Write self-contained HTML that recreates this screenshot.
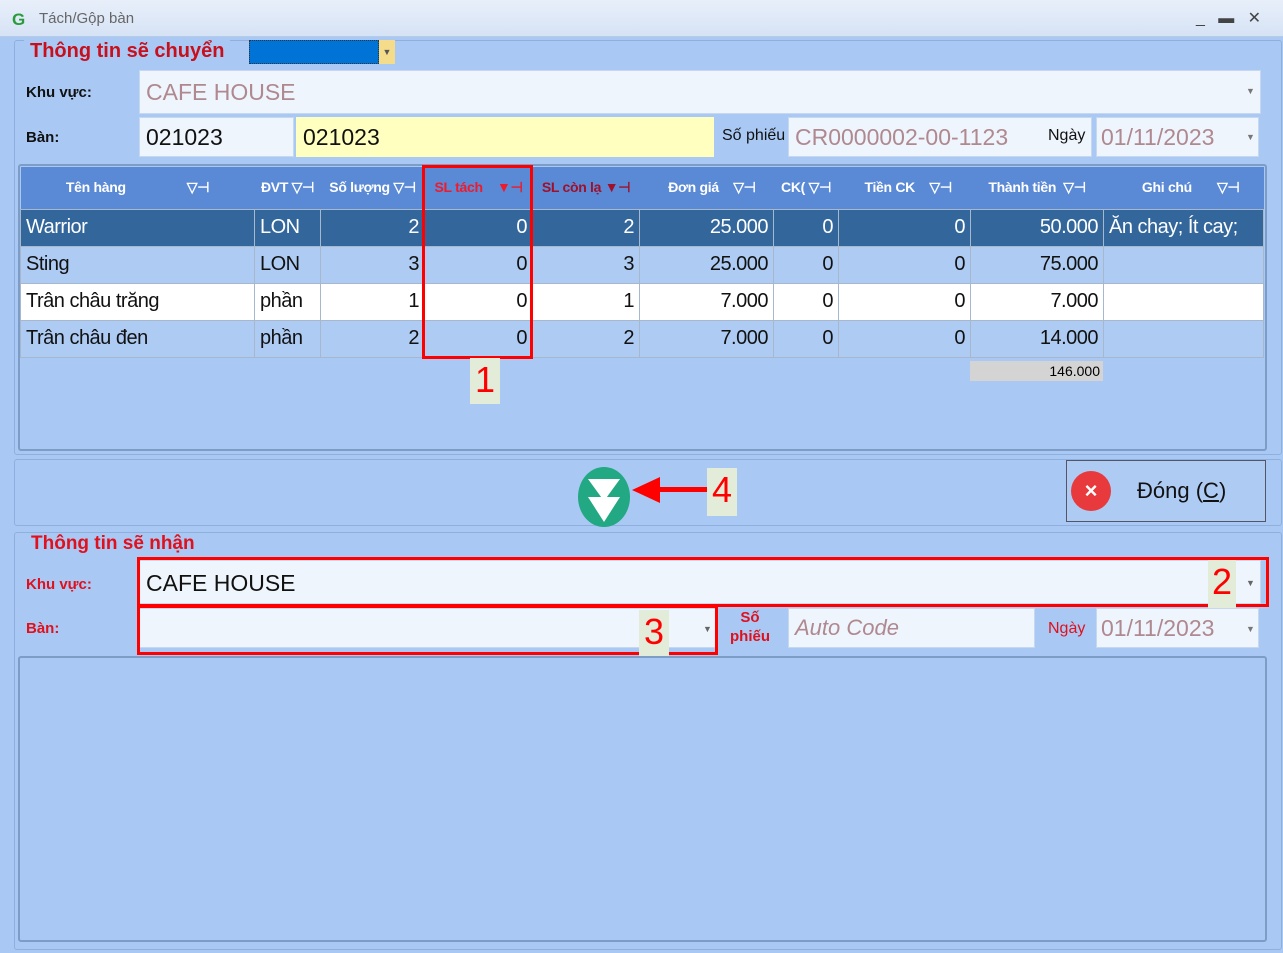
<!DOCTYPE html>
<html><head><meta charset="utf-8"><style>
*{margin:0;padding:0;box-sizing:border-box}
body{width:1283px;height:953px;overflow:hidden;background:#a9c9f4;font-family:"Liberation Sans",sans-serif;position:relative}
.a{position:absolute}
.tb{left:0;top:0;width:1283px;height:37px;background:linear-gradient(#e8effa,#d6e3f5);border-bottom:1px solid #b8cbe6}
.fs{border:1px solid #8fb0dc;border-radius:3px}
.inp{background:#eef5fc;border:1px solid #c5d8ef}
.lbl{font-size:15px;font-weight:bold;color:#111}
.big{font-size:23px}
.g{border-collapse:collapse;position:absolute;left:20px;top:167px;table-layout:fixed}
.g td{border:1px solid #a8b8cc;font-size:20px;height:37px;padding:0 5px;text-align:right;color:#111;white-space:nowrap;overflow:hidden;letter-spacing:-0.5px}
.g th{background:#5a89d6;color:#fff;font-size:14px;height:42px;font-weight:bold;border:none;white-space:nowrap;overflow:hidden;padding:0 4px;letter-spacing:-0.3px}
.sel td{background:#33679c;color:#fff}
.lb td{background:#aecbf3}
.wh td{background:#fff}
.red{border:3px solid #f00}
.num{background:#e3ecd9;color:#f00;font-size:36px;text-align:center;line-height:44px}
</style></head><body>
<div class="a tb"></div>
<div class="a" style="left:12px;top:10px;font-size:17px;font-weight:bold;color:#2a9b3a">G</div>
<div class="a" style="left:39px;top:10px;font-size:15px;color:#666">Tách/Gộp bàn</div>
<div class="a" style="left:1196px;top:8px;font-size:16px;color:#444">_&nbsp;&nbsp;&nbsp;▬&nbsp;&nbsp;&nbsp;✕</div>

<div class="a fs" style="left:14px;top:40px;width:1268px;height:415px"></div>
<div class="a" style="left:24px;top:40px;padding:0 6px;background:#a9c9f4;color:#c8101c;font-size:20px;font-weight:bold">Thông tin sẽ chuyển</div>
<div class="a" style="left:249px;top:40px;width:130px;height:24px;background:#0073d6;border:1px dotted #333"></div>
<div class="a" style="left:379px;top:40px;width:16px;height:24px;background:#f5dc8a;font-size:9px;color:#555;text-align:center;line-height:24px">▼</div>

<div class="a lbl" style="left:26px;top:84px">Khu vực:</div>
<div class="a inp" style="left:139px;top:70px;width:1122px;height:44px"></div>
<div class="a big" style="left:146px;top:79px;color:#b08890">CAFE HOUSE</div>
<div class="a" style="left:1246px;top:86px;font-size:9px;color:#777">▼</div>

<div class="a lbl" style="left:26px;top:129px">Bàn:</div>
<div class="a inp" style="left:139px;top:117px;width:155px;height:40px;background:#eef5fc"></div>
<div class="a big" style="left:146px;top:124px;color:#111">021023</div>
<div class="a" style="left:296px;top:117px;width:418px;height:40px;background:#ffffc0"></div>
<div class="a big" style="left:303px;top:124px;color:#111">021023</div>
<div class="a" style="left:722px;top:127px;font-size:16px;color:#111">Số phiếu</div>
<div class="a inp" style="left:788px;top:117px;width:304px;height:40px"></div>
<div class="a big" style="left:795px;top:124px;color:#b08890">CR0000002-00-1123</div>
<div class="a" style="left:1048px;top:127px;font-size:16px;color:#111">Ngày</div>
<div class="a inp" style="left:1096px;top:117px;width:163px;height:40px"></div>
<div class="a big" style="left:1101px;top:124px;color:#b08890">01/11/2023</div>
<div class="a" style="left:1246px;top:132px;font-size:9px;color:#777">▼</div>

<div class="a" style="left:18px;top:164px;width:1249px;height:287px;border:2px solid #7d9cc6;border-radius:3px"></div>
<table class="g">
<colgroup><col style="width:234px"><col style="width:66px"><col style="width:104px"><col style="width:108px"><col style="width:107px"><col style="width:134px"><col style="width:65px"><col style="width:132px"><col style="width:133px"><col style="width:160px"></colgroup>
<tr><th>Tên hàng&nbsp;&nbsp;&nbsp;&nbsp;&nbsp;&nbsp;&nbsp;&nbsp;&nbsp;&nbsp;&nbsp;&nbsp;&nbsp;&nbsp;&nbsp;&nbsp;&nbsp;▽⊣</th><th>ĐVT ▽⊣</th><th>Số lượng ▽⊣</th><th style="color:#f01a2a">SL tách &nbsp;&nbsp;&nbsp;▼⊣</th><th style="color:#a0102a">SL còn lạ ▼⊣</th><th>&nbsp;&nbsp;&nbsp;Đơn giá &nbsp;&nbsp;&nbsp;▽⊣</th><th>CK( ▽⊣</th><th>&nbsp;&nbsp;Tiền CK &nbsp;&nbsp;&nbsp;▽⊣</th><th>Thành tiền &nbsp;▽⊣</th><th>&nbsp;&nbsp;&nbsp;&nbsp;Ghi chú &nbsp;&nbsp;&nbsp;&nbsp;&nbsp;&nbsp;▽⊣</th></tr>
<tr class="sel"><td style="text-align:left">Warrior</td><td style="text-align:left">LON</td><td>2</td><td>0</td><td>2</td><td>25.000</td><td>0</td><td>0</td><td>50.000</td><td style="text-align:left">Ăn chay; Ít cay;</td></tr>
<tr class="lb"><td style="text-align:left">Sting</td><td style="text-align:left">LON</td><td>3</td><td>0</td><td>3</td><td>25.000</td><td>0</td><td>0</td><td>75.000</td><td></td></tr>
<tr class="wh"><td style="text-align:left">Trân châu trăng</td><td style="text-align:left">phần</td><td>1</td><td>0</td><td>1</td><td>7.000</td><td>0</td><td>0</td><td>7.000</td><td></td></tr>
<tr class="lb"><td style="text-align:left">Trân châu đen</td><td style="text-align:left">phần</td><td>2</td><td>0</td><td>2</td><td>7.000</td><td>0</td><td>0</td><td>14.000</td><td></td></tr>
</table>
<div class="a" style="left:970px;top:361px;width:133px;height:20px;background:#d4d4d4;font-size:14px;text-align:right;padding-right:3px;line-height:20px">146.000</div>
<div class="a red" style="left:422px;top:165px;width:111px;height:194px"></div>
<div class="a num" style="left:470px;top:358px;width:30px;height:46px">1</div>

<div class="a fs" style="left:14px;top:459px;width:1268px;height:67px"></div>
<svg class="a" style="left:577px;top:466px" width="54" height="62" viewBox="0 0 54 62"><ellipse cx="27" cy="31" rx="26" ry="30" fill="#22a882"/><polygon points="11,13 43,13 27,35" fill="#fff"/><polygon points="11,31 43,31 27,56" fill="#fff"/></svg>
<svg class="a" style="left:630px;top:475px" width="80" height="30"><polygon points="2,15 30,2 30,28" fill="#f00"/><rect x="28" y="12" width="50" height="5" fill="#f00"/></svg>
<div class="a num" style="left:707px;top:468px;width:30px;height:48px">4</div>
<div class="a" style="left:1066px;top:460px;width:200px;height:62px;border:1px solid #556;background:#aecbf3"></div>
<div class="a" style="left:1071px;top:471px;width:40px;height:40px;border-radius:50%;background:#e8393c;color:#fff;font-size:22px;text-align:center;line-height:40px;font-weight:bold">×</div>
<div class="a" style="left:1137px;top:478px;font-size:22px;color:#111">Đóng (<u>C</u>)</div>

<div class="a fs" style="left:14px;top:532px;width:1268px;height:418px"></div>
<div class="a" style="left:26px;top:533px;padding:0 5px;background:#a9c9f4;color:#e0101c;font-size:19px;font-weight:bold">Thông tin sẽ nhận</div>
<div class="a" style="left:26px;top:576px;font-size:15px;color:#e0101c;font-weight:bold">Khu vực:</div>
<div class="a inp" style="left:139px;top:560px;width:1122px;height:44px"></div>
<div class="a big" style="left:146px;top:570px;color:#111">CAFE HOUSE</div>
<div class="a" style="left:1246px;top:578px;font-size:9px;color:#666">▼</div>
<div class="a red" style="left:137px;top:557px;width:1132px;height:50px"></div>
<div class="a num" style="left:1208px;top:560px;width:28px;height:48px">2</div>

<div class="a" style="left:26px;top:620px;font-size:15px;color:#e0101c;font-weight:bold">Bàn:</div>
<div class="a inp" style="left:139px;top:608px;width:577px;height:40px"></div>
<div class="a" style="left:703px;top:624px;font-size:9px;color:#666">▼</div>
<div class="a red" style="left:137px;top:605px;width:581px;height:50px"></div>
<div class="a num" style="left:639px;top:610px;width:30px;height:48px">3</div>
<div class="a" style="left:730px;top:608px;font-size:15px;color:#e0101c;font-weight:bold;text-align:center;line-height:19px">Số<br>phiếu</div>
<div class="a inp" style="left:788px;top:608px;width:247px;height:40px"></div>
<div class="a" style="left:795px;top:615px;font-size:22px;font-style:italic;color:#b08890">Auto Code</div>
<div class="a" style="left:1048px;top:620px;font-size:16px;color:#e0101c">Ngày</div>
<div class="a inp" style="left:1096px;top:608px;width:163px;height:40px"></div>
<div class="a big" style="left:1101px;top:615px;color:#b08890">01/11/2023</div>
<div class="a" style="left:1246px;top:624px;font-size:9px;color:#777">▼</div>
<div class="a" style="left:18px;top:656px;width:1249px;height:286px;border:2px solid #7d9cc6;border-radius:3px"></div>
</body></html>
